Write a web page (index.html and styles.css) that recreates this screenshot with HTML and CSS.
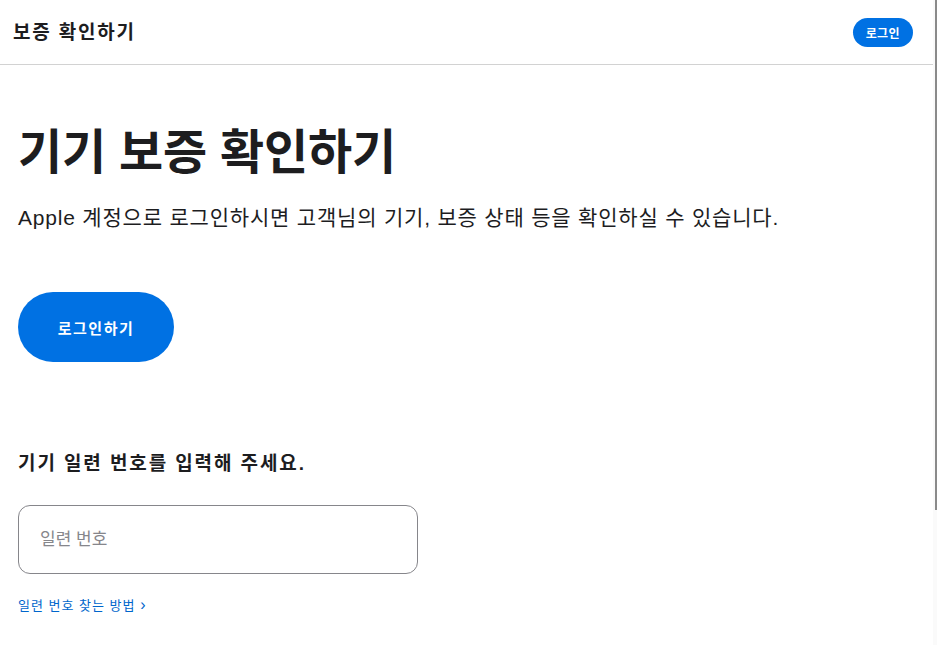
FILE: index.html
```html
<!DOCTYPE html>
<html lang="ko">
<head>
<meta charset="utf-8">
<title>보증 확인하기</title>
<link rel="stylesheet" href="styles.css">
</head>
<body>
<div class="page">
  <header class="topbar">
    <div class="brand">보증 확인하기</div>
    <button class="pill-small" type="button">로그인</button>
  </header>
  <main class="content">
    <h1 class="title">기기 보증 확인하기</h1>
    <p class="lead">Apple 계정으로 로그인하시면 고객님의 기기, 보증 상태 등을 확인하실 수 있습니다.</p>
    <button class="pill-large" type="button">로그인하기</button>
    <h2 class="label">기기 일련 번호를 입력해 주세요.</h2>
    <div class="field">
      <input class="field-input" type="text" placeholder="일련 번호">
    </div>
    <a class="help-link" href="#">일련 번호 찾는 방법 <span class="chev">›</span></a>
  </main>
</div>
<div class="scrollbar"><div class="scroll-thumb"></div></div>
</body>
</html>
```
FILE: styles.css
```css
body {
  margin: 0;
  font-family: "Liberation Sans", "Noto Sans CJK KR", sans-serif;
  color: #1d1d1f;
  background: #fff;
}
.page {
  width: calc(100% - 4px);
}
.scrollbar {
  position: fixed;
  top: 0;
  right: 0;
  width: 4px;
  height: 100%;
  background: #fafafa;
}
.scroll-thumb {
  margin-left: 2px;
  width: 2px;
  height: 510px;
  background: #8a8a8a;
}
.topbar {
  height: 64px;
  border-bottom: 1px solid #d2d2d2;
  display: flex;
  align-items: center;
  justify-content: space-between;
  padding: 0 20px 0 13px;
}
.brand {
  font-size: 19px;
  font-weight: 700;
  letter-spacing: 1.8px;
  line-height: 24px;
  padding-top: 2px;
}
.pill-small {
  height: 29px;
  padding: 0 13px;
  border: none;
  border-radius: 15px;
  background: #0071e3;
  color: #fff;
  font-family: inherit;
  font-size: 12px;
  font-weight: 700;
  letter-spacing: 0.4px;
}
.content {
  padding: 0 18px;
  display: flex;
  flex-direction: column;
  align-items: flex-start;
}
.title {
  margin: 58px 0 0;
  font-size: 48px;
  line-height: 60px;
  font-weight: 700;
  letter-spacing: -0.2px;
}
.lead {
  margin: 20px 0 0;
  font-size: 21px;
  line-height: 30px;
  letter-spacing: 0.8px;
}
.pill-large {
  margin-top: 59px;
  width: 156px;
  height: 70px;
  border: none;
  border-radius: 35px;
  background: #0071e3;
  color: #fff;
  font-family: inherit;
  font-size: 15px;
  font-weight: 700;
  letter-spacing: 1.5px;
}
.label {
  margin: 89px 0 0;
  font-size: 19px;
  line-height: 26px;
  font-weight: 700;
  letter-spacing: 1.9px;
}
.field {
  margin-top: 28px;
}
.field-input {
  box-sizing: border-box;
  width: 400px;
  height: 69px;
  border: 1px solid #86868b;
  border-radius: 12px;
  padding: 0 21px;
  font-family: inherit;
  font-size: 17px;
  color: #1d1d1f;
  outline: none;
}
.field-input::placeholder {
  color: #86868b;
}
.help-link {
  margin-top: 22px;
  font-size: 13px;
  line-height: 18px;
  color: #0066cc;
  text-decoration: none;
  letter-spacing: 1px;
}
.chev {
  font-size: 16px;
}
```
